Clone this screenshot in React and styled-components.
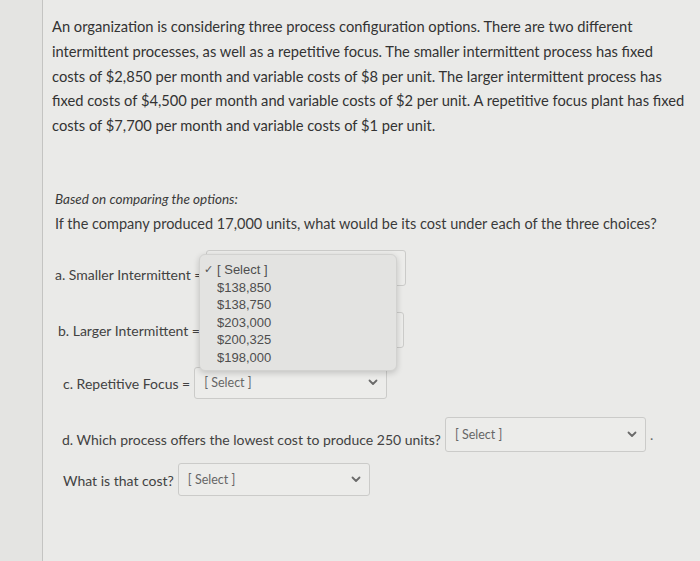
import React from "react";
import styled, { createGlobalStyle } from "styled-components";

const GlobalStyle = createGlobalStyle`
  html, body {
    margin: 0;
    padding: 0;
    background: #e9e9e7;
  }
  body {
    font-family: Lato, "Open Sans", sans-serif;
    color: #3a3a3a;
  }
`;

const options = ["$138,850", "$138,750", "$203,000", "$200,325", "$198,000"];

const Chevron = () => (
  <svg width="10" height="7" viewBox="0 0 10 7">
    <path d="M1.5 1.5 L5 5 L8.5 1.5" fill="none" stroke="#6a6a6a" strokeWidth="1.8" strokeLinecap="round" strokeLinejoin="round" />
  </svg>
);

const SelectField = ({ width, height }) => (
  <SelectBox $width={width} $height={height}>
    <SelectText>[ Select ]</SelectText>
    <Chevron />
  </SelectBox>
);

const App = () => {
  return (
    <>
      <GlobalStyle />
      <Page>
        <Gutter />
        <Content>
          <Paragraph>
            <Line>An organization is considering three process configuration options. There are two different</Line>
            <Line>intermittent processes, as well as a repetitive focus. The smaller intermittent process has fixed</Line>
            <Line>costs of $2,850 per month and variable costs of $8 per unit. The larger intermittent process has</Line>
            <Line>fixed costs of $4,500 per month and variable costs of $2 per unit. A repetitive focus plant has fixed</Line>
            <Line>costs of $7,700 per month and variable costs of $1 per unit.</Line>
          </Paragraph>

          <Intro>Based on comparing the options:</Intro>
          <Question>If the company produced 17,000 units, what would be its cost under each of the three choices?</Question>

          <Row $top={16} $indent={3} $height={36}>
            <Label $drop={15}>a. Smaller Intermittent =</Label>
            <SelectField width={200} height={36} />
            <Popup>
              <Option>
                <Check>✓</Check>[ Select ]
              </Option>
              {options.map((o) => (
                <Option key={o}>{o}</Option>
              ))}
            </Popup>
          </Row>

          <Row $top={26} $indent={6} $height={36}>
            <Label $drop={9}>b. Larger Intermittent =</Label>
            <SelectField width={200} height={36} />
          </Row>

          <Row $top={19} $indent={11} $height={32}>
            <Label $drop={7}>c. Repetitive Focus =</Label>
            <SelectField width={193} height={32} />
          </Row>

          <Row $top={18} $indent={10} $height={35}>
            <Label $drop={13}>d. Which process offers the lowest cost to produce 250 units?</Label>
            <SelectField width={201} height={35} />
            <Dot>.</Dot>
          </Row>

          <Row $top={11} $indent={11} $height={33}>
            <Label $drop={8}>What is that cost?</Label>
            <SelectField width={192} height={33} />
          </Row>
        </Content>
      </Page>
    </>
  );
};

export default App;

const Page = styled.div`
  display: flex;
  min-height: 561px;
  background: #eaeae8;
`;

const Gutter = styled.div`
  width: 42px;
  flex-shrink: 0;
  background: #e4e4e2;
  border-right: 1px solid #c4c4c2;
`;

const Content = styled.div`
  flex: 1;
  padding: 14px 0 0 9px;
`;

const Paragraph = styled.div`
  font-size: 14.7px;
  line-height: 24.8px;
  color: #333;
`;

const Line = styled.div`
  white-space: nowrap;
`;

const Intro = styled.div`
  margin: 51px 0 0 3px;
  font-size: 13.5px;
  line-height: 20px;
  font-style: italic;
  color: #3a3a3a;
`;

const Question = styled.div`
  margin: 5px 0 0 3px;
  font-size: 14.5px;
  line-height: 20px;
  color: #3a3a3a;
  white-space: nowrap;
`;

const Row = styled.div`
  position: relative;
  display: flex;
  align-items: flex-start;
  gap: 4px;
  height: ${(p) => p.$height}px;
  margin-top: ${(p) => p.$top}px;
  padding-left: ${(p) => p.$indent}px;
`;

const Label = styled.span`
  padding-top: ${(p) => p.$drop}px;
  font-size: 14px;
  line-height: 20px;
  color: #424242;
  white-space: nowrap;
`;

const SelectBox = styled.div`
  box-sizing: border-box;
  display: flex;
  align-items: center;
  justify-content: space-between;
  width: ${(p) => p.$width}px;
  height: ${(p) => p.$height}px;
  padding: 0 8px 0 9px;
  border: 1px solid #cbcbc9;
  border-radius: 3px;
  background: #ececea;
`;

const SelectText = styled.span`
  font-size: 12.5px;
  color: #666;
`;

const Dot = styled.span`
  align-self: center;
  font-size: 14px;
  color: #666;
`;

const Popup = styled.div`
  position: absolute;
  left: 147px;
  top: 4px;
  width: 198px;
  box-sizing: border-box;
  padding: 6px 0 3px 17px;
  background: #e3e3e1;
  border: 1px solid #d2d2d0;
  border-radius: 6px;
  box-shadow: 0 2px 6px rgba(0, 0, 0, 0.18);
  z-index: 2;
`;

const Option = styled.div`
  position: relative;
  font-family: "Liberation Sans", Arial, sans-serif;
  font-size: 13px;
  line-height: 17.6px;
  color: #4e4e4e;
`;

const Check = styled.span`
  position: absolute;
  left: -13px;
  font-size: 11px;
  color: #555;
`;
